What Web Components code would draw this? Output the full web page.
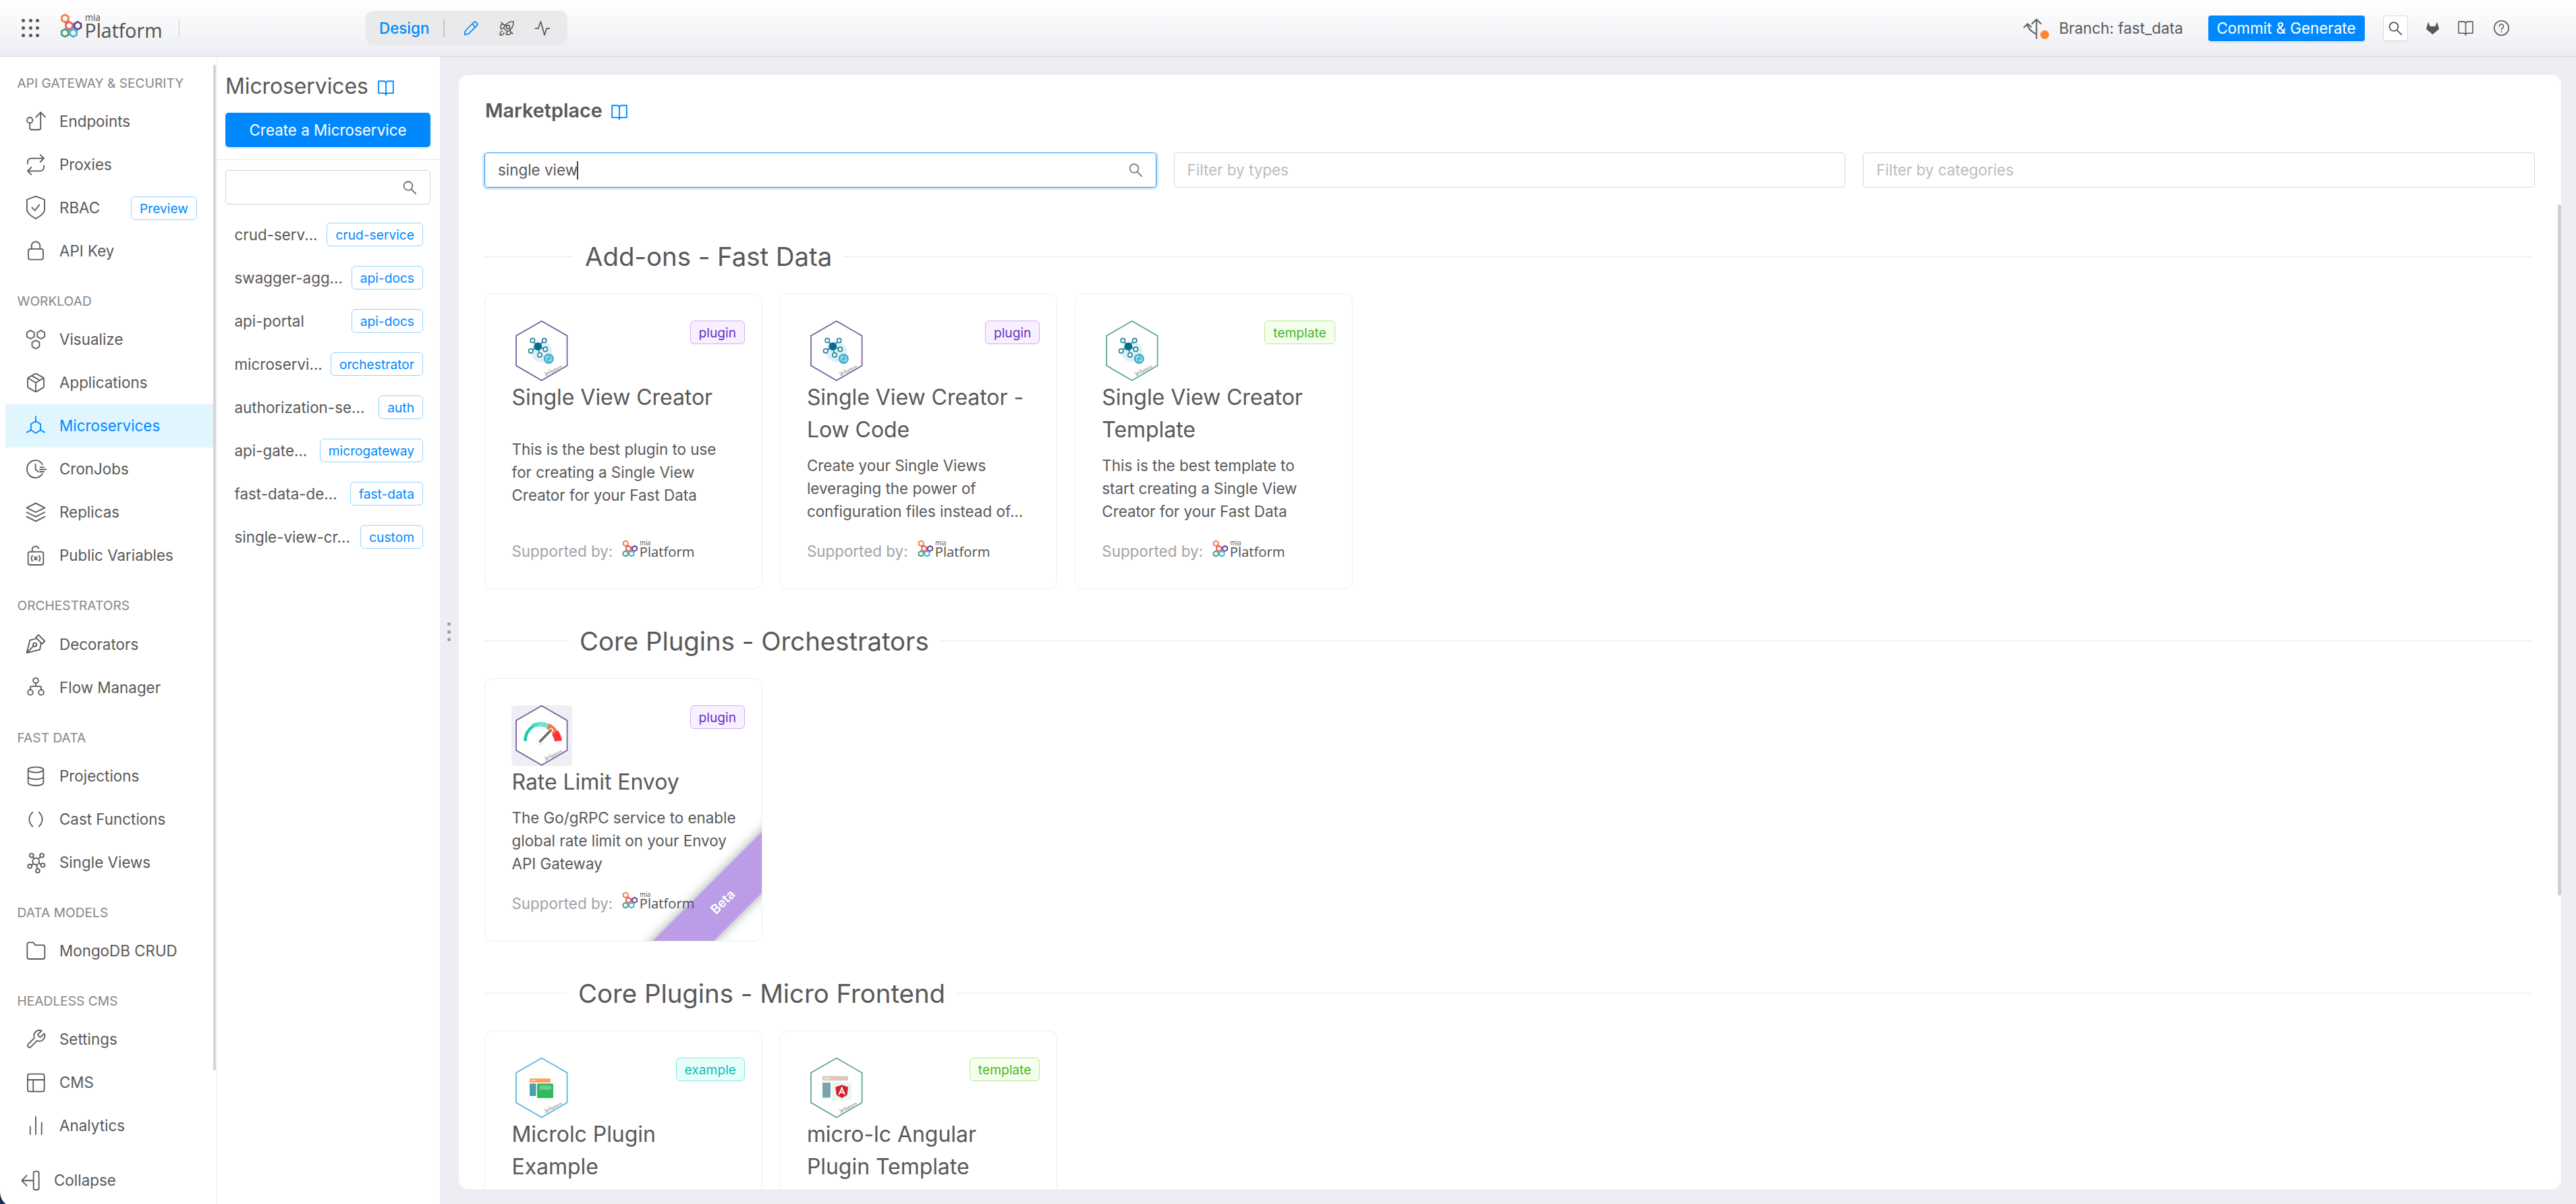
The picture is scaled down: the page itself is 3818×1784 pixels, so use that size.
<!DOCTYPE html>
<html lang="en">
<head>
<meta charset="utf-8">
<title>Mia Platform - Design</title>
<style>
html,body{margin:0;height:100%;overflow:hidden}
body{font-family:Inter,"Liberation Sans",sans-serif;font-size:22.4px;line-height:33.6px;color:#595959;background:#edeef3}
</style>
</head>
<body>
<mia-app></mia-app>
<script>
const hexPath=(cx,cy,r)=>{const w=r*0.87;return `M${cx} ${cy-r}L${cx+w} ${cy-r/2}V${cy+r/2}L${cx} ${cy+r}L${cx-w} ${cy+r/2}V${cy-r/2}Z`;};
const logoMark=`<g fill="none" stroke-width="2.7">
<path stroke="#f0804a" d="${hexPath(7.4,7.3,5.6)}"/><path stroke="#ea5460" d="${hexPath(13.6,18,5.6)}"/>
<path stroke="#5d4489" d="${hexPath(26.2,18,5.6)}"/><path stroke="#41a373" d="${hexPath(7.2,28.8,5.6)}"/>
<path stroke="#40b4da" d="${hexPath(19.7,28.8,5.6)}"/></g>
<g fill="#4f4f4f" font-family="'Open Sans','Noto Sans',sans-serif"><text x="37" y="11" font-size="14" textLength="23" lengthAdjust="spacingAndGlyphs">mia</text>
<text x="36.5" y="35.6" font-size="28.5" font-weight="500" textLength="115" lengthAdjust="spacingAndGlyphs">Platform</text></g>`;

const ICONS={
endpoints:'<circle cx="5.4" cy="10.6" r="3.1"/><path d="M5.4 13.8v5.4a2 2 0 0 0 2 2h8a2 2 0 0 0 2-2V2.2M12.2 7.2l5.2-5.4 5.2 5.4"/>',
proxies:'<path d="M17 1l4 4-4 4M3 11V9a4 4 0 0 1 4-4h14M7 23l-4-4 4-4M21 13v2a4 4 0 0 1-4 4H3"/>',
rbac:'<path d="M12 -.8l9.8 3.6v11c0 4-5.5 7.8-9.8 10.2-4.300-2.400-9.800-6.200-9.800-10.200v-11z"/><path d="M7.800 11.500l3.200 3.500 5-6.500"/>',
lock:'<rect x="3.800" y="9.600" width="16.400" height="11.800" rx="2"/><path d="M7.300 9.600V6.300a4.700 4.700 0 0 1 9.400 0v3.300"/>',
visualize:`<path d="${hexPath(6.2,6.6,4.7)}${hexPath(17.8,6.6,4.7)}${hexPath(12,17.6,4.7)}"/>`,
box:'<path d="M21 16V8a2 2 0 0 0-1-1.730l-7-4a2 2 0 0 0-2 0l-7 4A2 2 0 0 0 3 8v8a2 2 0 0 0 1 1.730l7 4a2 2 0 0 0 2 0l7-4A2 2 0 0 0 21 16zM3.270 6.960L12 12.010l8.730-5.050M12 22.080V12M7.500 4.200l9 5.200"/>',
micro:`<path d="M12 1.500v5.200l5.300 3.300v6.600L12 20l-5.300-3.400V10L12 6.700M6.700 16.600l-4.500 2.600M17.300 16.600l4.500 2.600"/>`,
cron:'<path d="M19.300 6.700A9.300 9.700 0 1 0 19.300 17.300M11.700 6.500v6l3.600 2.800M17 10h4M16.500 12.500h7M17 15h4"/>',
layers:'<path d="M12 2L2 7l10 5 10-5zM2 17l10 5 10-5M2 12l10 5 10-5"/>',
vars:'<rect x="3.500" y="8" width="17" height="14.500" rx="2"/><path d="M8 8V5.500a3.800 3.800 0 0 1 7.300-1.300M8.200 12.200q-2 3 0 6M15.800 12.200q2 3 0 6M10.500 13.500l3 3.400M13.500 13.500l-3 3.400"/>',
pen:'<g transform="translate(0 24) scale(1 -1)"><path d="M2 2l3.500 14L13 18l5-5-1.500-7.500zM2 2l7.600 7.600M12 19l7-7 3 3-7 7z"/><circle cx="11" cy="11" r="2"/></g>',
flow:'<circle cx="12" cy="4.800" r="2.900"/><circle cx="6" cy="18" r="2.900"/><circle cx="18" cy="18" r="2.900"/><path d="M12 7.700v3.500M6 15v-2.300q0-1.500 1.500-1.500h9q1.500 0 1.500 1.500V15"/>',
db:'<ellipse cx="12" cy="4.900" rx="8.500" ry="3"/><path d="M20.500 12.500c0 1.660-4 3-8.500 3s-8.500-1.340-8.500-3M3.500 5v14.500c0 1.660 4 3 8.500 3s8.500-1.340 8.500-3V5"/>',
parens:'<path d="M8.500 4c-5 5-5 11 0 16M15.500 4c5 5 5 11 0 16"/>',
net:'<circle cx="12.200" cy="10.800" r="3.700"/><circle cx="7.300" cy="4.200" r="2.200"/><circle cx="18.800" cy="4.200" r="2.200"/><circle cx="5.400" cy="16.200" r="2.200"/><circle cx="19.800" cy="15" r="2.200"/><circle cx="14.200" cy="21.200" r="2.200"/><path d="M8.700 6l1.500 1.800M17.200 5.900l-2.400 2.100M7.300 15l2.200-1.800M17.700 14l-2-1.200M13 14.500l.7 4.400"/>',
folder:'<path d="M22 19a2 2 0 0 1-2 2H4.500a2 2 0 0 1-2-2V4.500a2 2 0 0 1 2-2h4.700L11.500 5.500H20a2 2 0 0 1 2 2z"/>',
tool:'<path d="M14.700 6.300a1 1 0 0 0 0 1.400l1.600 1.600a1 1 0 0 0 1.400 0l3.770-3.770a6 6 0 0 1-7.940 7.940l-6.910 6.910a2.120 2.120 0 0 1-3-3l6.910-6.910a6 6 0 0 1 7.940-7.940l-3.760 3.760z"/>',
layout:'<rect x="3" y="2.500" width="18.500" height="19.500" rx="2"/><path d="M3 9h18.500M9.200 22V9"/>',
bars:'<path d="M18.500 21.500V8.500M12 21.500V2M5.800 21.500V13"/>',
collapse:'<rect x="15.500" y="2" width="6" height="20.500" rx="2"/><path d="M15 12.200H2.500M8 6.500l-5.500 5.700L8 18"/>',
search:'<circle cx="9.800" cy="9.300" r="7"/><path d="M14.800 14.800l7.200 7.200"/>',
book:'<path d="M2 3h7a3 3 0 0 1 3 3v16a2.500 2.500 0 0 0-2.500-2.500H2zM22 3h-7a3 3 0 0 0-3 3v16a2.500 2.500 0 0 1 2.500-2.500H22z"/>',
pencil:'<path d="M2.500 21.500l1.300-6L16.300 3a2.200 2.200 0 0 1 3.100 0l1.600 1.600a2.200 2.200 0 0 1 0 3.100L8.500 20.200zM14 5.500l4.500 4.500"/>',
rocket:'<path d="M22 2c-6-.3-11 2-14.500 9.500l5.500 5.500C20 13.500 22.300 8 22 2zM10 7.500L5 5.500c-2 2-2.500 4.500-1.500 7.500l4-1.500M16.500 14l2 5c-2 2.500-4.500 3-7.500 1.500l1.500-3.500M5.500 16c-2.500.5-3.500 3-3.500 6 3 0 5.500-1 6-3.500M4 3l5 5M21 20l-5-5"/><circle cx="14" cy="10" r="2.600"/>',
pulse:'<path d="M1.500 12.200h4.200L9.500 2l5.500 20 3.200-9.800H22.500"/>',
help:'<circle cx="12" cy="12" r="10.300"/><path d="M9 9.500a3 3 0 1 1 4.500 2.600q-1.500.8-1.500 2.200M12 17v.5"/>',
gitlab:'<path fill="currentColor" stroke="none" d="M5.200 2.500L8 9.500h8l2.800-7L22 13.500 12 22 2 13.500z"/>',
branch:'<path d="M16 23V2M11.200 6.800L16 2l4.800 4.800M16 18.500C10 15.500 6 12 6 7.500M2.200 11L6 7l4 3.400"/>'
};

const define=(name,html)=>customElements.define(name,class extends HTMLElement{
  connectedCallback(){
    if(this.shadowRoot)return;
    const t=document.createElement('template');
    t.innerHTML=typeof html==='function'?html(this):html;
    this.attachShadow({mode:'open'}).append(t.content.cloneNode(true));
  }
});

define('mia-icon',el=>`<style>:host{display:block;flex:none;width:${el.getAttribute('size')||32}px;height:${el.getAttribute('size')||32}px}
svg{display:block;width:100%;height:100%;overflow:visible;fill:none;stroke:currentColor;stroke-width:${el.getAttribute('stroke')||1.35};stroke-linecap:round;stroke-linejoin:round}</style>
<svg viewBox="0 0 24 24">${ICONS[el.getAttribute('name')]}</svg>`);

define('mia-logo',`<style>:host{display:block;flex:none;width:151px;height:38px}svg{display:block;width:100%;height:100%;overflow:visible}</style><svg viewBox="0 0 151 38">${logoMark}</svg>`);

define('mia-tag',`<style>:host{display:block;flex:none;box-sizing:border-box;height:35px;padding:0 12px;border:1px solid #91d5ff;border-radius:6px;background:#fff;color:#0089ff;font-size:19.2px;line-height:34px;white-space:nowrap}
:host([kind=plugin]){border-color:#d3adf7;background:#f9f0ff;color:#6530c8}
:host([kind=template]){color:#47b82a;border-color:#b7eb8f;background:#f6ffed}
:host([kind=example]){color:#13b9b9;border-color:#87e8de;background:#e6fffb}</style><slot></slot>`);

define('mia-header',`<style>
:host{display:flex;box-sizing:border-box;height:84px;flex:none;align-items:center;border-bottom:1px solid #d3d4d8;background:linear-gradient(#fff,#edeef3);padding:0 98px 0 32px}
.grid{display:grid;grid-template-columns:repeat(3,5px);gap:6px 5.500px}.grid i{width:5px;height:5px;border-radius:50%;background:#555}
mia-logo{margin:-6px 0 0 31px}.sep{width:1px;height:27px;background:#d4d4d4;margin-left:25px}
.pill{display:flex;align-items:center;height:51px;width:299px;box-sizing:border-box;margin-left:276px;padding-left:20px;border-radius:12px;background:#e9eaeb}
.pill b{flex:none;font-weight:450;color:#0089ff;width:95px}.pill u{flex:none;width:2px;height:26px;background:#c6c6c6;margin-right:27px}
.pill mia-icon+mia-icon{margin-left:29px}
.right{display:flex;align-items:center;margin-left:auto}
.branch{position:relative;margin-right:23px}.dot{position:absolute;left:27px;top:19px;width:13px;height:13px;border-radius:50%;background:#fd8733}
.commit{box-sizing:border-box;height:38px;width:232px;margin-left:37px;border-radius:4px;background:#0089ff;color:#fff;text-align:center;line-height:37px;box-shadow:0 3px 0 rgba(0,0,0,.05)}
.sq{display:flex;align-items:center;justify-content:center;width:35px;height:36px;border:1px solid #d9d9d9;border-radius:4px;background:#fff;margin:0 25px 0 27px;box-shadow:0 3px 0 rgba(0,0,0,.02)}
</style>
<div class="grid"><i></i><i></i><i></i><i></i><i></i><i></i><i></i><i></i><i></i></div>
<mia-logo></mia-logo><div class="sep"></div>
<div class="pill"><b>Design</b><u></u><mia-icon name="pencil" size="24" stroke="1.700" style="color:#0089ff"></mia-icon><mia-icon name="rocket" size="24" stroke="1.600"></mia-icon><mia-icon name="pulse" size="24" stroke="1.700"></mia-icon></div>
<div class="right"><div class="branch"><mia-icon name="branch" size="32" stroke="1.500"></mia-icon><div class="dot"></div></div><span>Branch: fast_data</span><div class="commit">Commit &amp; Generate</div><div class="sq"><mia-icon name="search" size="22" stroke="2"></mia-icon></div><mia-icon name="gitlab" size="23"></mia-icon><mia-icon name="book" size="25" stroke="1.500" style="margin:0 28px 0 25.500px"></mia-icon><mia-icon name="help" size="25" stroke="1.500"></mia-icon></div>`);

define('nav-item',el=>`<style>:host{display:flex;box-sizing:border-box;height:64px;align-items:center;padding:0 24px 0 29px;margin-left:8px}
:host([active]){background:#e1f5ff;color:#0089ff}span{margin-left:19px;flex:1}</style>
<mia-icon name="${el.getAttribute('icon')}"></mia-icon><span><slot></slot></span><slot name="tag"></slot>`);

define('nav-group',el=>`<style>:host{display:block}header{box-sizing:border-box;height:67.200px;padding:26.200px 0 0 25.500px;font-size:19.200px;color:#868686;white-space:nowrap}</style>
<header>${el.getAttribute('label').replace('&','&amp;')}</header><slot></slot>`);

define('mia-sidebar',`<style>
:host{display:flex;flex-direction:column;position:relative;box-sizing:border-box;width:322px;flex:none;background:#fff;border-right:1px solid #ebebeb}
nav{flex:1;min-height:0;margin-top:-3.200px;padding-right:5px}
.thumb{position:absolute;right:1px;top:12px;width:4px;height:1490px;border-radius:3px;background:#d4d4d4}
footer{display:flex;align-items:center;height:70px;padding-left:29px}footer span{margin-left:19px}
.corner{position:absolute;left:0;bottom:0;display:block}
</style>
<nav>
<nav-group label="API GATEWAY &amp; SECURITY"><nav-item icon="endpoints">Endpoints</nav-item><nav-item icon="proxies">Proxies</nav-item><nav-item icon="rbac">RBAC<mia-tag slot="tag">Preview</mia-tag></nav-item><nav-item icon="lock">API Key</nav-item></nav-group>
<nav-group label="WORKLOAD"><nav-item icon="visualize">Visualize</nav-item><nav-item icon="box">Applications</nav-item><nav-item icon="micro" active>Microservices</nav-item><nav-item icon="cron">CronJobs</nav-item><nav-item icon="layers">Replicas</nav-item><nav-item icon="vars">Public Variables</nav-item></nav-group>
<nav-group label="ORCHESTRATORS"><nav-item icon="pen">Decorators</nav-item><nav-item icon="flow">Flow Manager</nav-item></nav-group>
<nav-group label="FAST DATA"><nav-item icon="db">Projections</nav-item><nav-item icon="parens">Cast Functions</nav-item><nav-item icon="net">Single Views</nav-item></nav-group>
<nav-group label="DATA MODELS"><nav-item icon="folder">MongoDB CRUD</nav-item></nav-group>
<nav-group label="HEADLESS CMS"><nav-item icon="tool">Settings</nav-item><nav-item icon="layout">CMS</nav-item><nav-item icon="bars">Analytics</nav-item></nav-group>
</nav>
<footer><mia-icon name="collapse"></mia-icon><span>Collapse</span></footer>
<div class="thumb"></div>
<svg class="corner" width="10" height="20"><path d="M0 1Q0 13 8.500 20H0Z" fill="#182c50"/></svg>`);

define('service-row',el=>`<style>:host{display:flex;height:64px;align-items:center;justify-content:space-between;padding:0 25px 0 25.500px;white-space:nowrap}</style>
<span><slot></slot></span><mia-tag>${el.getAttribute('tag')}</mia-tag>`);

define('services-panel',`<style>
:host{display:flex;flex-direction:column;width:330px;flex:none;background:#fff}
h2{display:flex;align-items:center;margin:26px 0 0 12px;height:36px;font-size:32px;font-weight:400;letter-spacing:-.12px}h2 mia-icon{margin:4px 0 0 13px;color:#0089ff}
.btn{height:51px;line-height:52px;margin:21px 14px 0 12px;border-radius:5px;background:#0089ff;color:#fff;text-align:center;box-shadow:0 3px 0 rgba(0,0,0,.045)}
hr{width:100%;height:1px;border:0;margin:18px 0 15px;background:#e6e6e6}
.search{display:flex;align-items:center;justify-content:flex-end;box-sizing:border-box;height:51px;margin:0 14px 12.500px 12px;padding-right:19px;border:1px solid #d3d3d3;border-radius:5px}
</style>
<h2>Microservices<mia-icon name="book" size="26" stroke="1.700"></mia-icon></h2>
<div class="btn">Create a Microservice</div><hr><div class="search"><mia-icon name="search" size="22" stroke="1.700"></mia-icon></div>
<service-row tag="crud-service">crud-serv...</service-row><service-row tag="api-docs">swagger-agg...</service-row><service-row tag="api-docs">api-portal</service-row><service-row tag="orchestrator">microservi...</service-row><service-row tag="auth">authorization-se...</service-row><service-row tag="microgateway">api-gate...</service-row><service-row tag="fast-data">fast-data-de...</service-row><service-row tag="custom">single-view-cr...</service-row>`);

define('mia-splitter',`<style>:host{display:flex;flex-direction:column;align-items:center;justify-content:center;gap:6.600px;width:28px;flex:none;padding:4px 1px 0 0;box-sizing:border-box}i{width:5px;height:5px;border-radius:50%;background:#9d9d9d}</style><i></i><i></i><i></i>`);

const ART={
net:`<circle cx="44.700" cy="46" r="15.500" fill="#e0eff5"/><g stroke="#17809c" stroke-width="1.600" fill="#fff"><path d="M39.300 38.300L31.300 29.600M39.300 38.300L48.700 29.600M39.300 38.300L28.700 45M39.300 38.300L50.300 42.600M39.300 38.300L42 51"/><circle cx="31.300" cy="29.600" r="3.200"/><circle cx="48.700" cy="29.600" r="3.200"/><circle cx="28.700" cy="45" r="3.200"/><circle cx="50.300" cy="42.600" r="3.200"/><circle cx="42" cy="51" r="3.200"/></g><circle cx="39.300" cy="38.300" r="5.900" fill="#056d90"/><circle cx="55.300" cy="56.600" r="7.600" fill="#45b3d1"/><path d="M53.800 60.300a4 4 0 0 1-.6-7M56.800 53a4 4 0 0 1 .6 7M52 53.200h2.200v2.300M58.600 60h-2.200v-2.300" fill="none" stroke="#d9f1f7" stroke-width="1.200"/>`,
gauge:`<g fill="none"><path d="M20.500 53A26 26 0 0 1 31.500 31.500" stroke="#16c9ae" stroke-width="4.500"/><path d="M30.500 31.500A25 25 0 0 1 40 28" stroke="#48dcc0" stroke-width="6"/><path d="M39.500 28.200A24 24 0 0 1 54.500 31" stroke="#72e3ca" stroke-width="7"/><path d="M54 31A25 25 0 0 1 65 41" stroke="#fd7446" stroke-width="9"/><path d="M64.500 40.500A25 25 0 0 1 69.500 53" stroke="#fd3440" stroke-width="11"/></g><circle cx="42.500" cy="54" r="5" fill="#ededed"/><path d="M41.800 54L59 37" stroke="#fff" stroke-width="6" stroke-linecap="round"/><path d="M42.500 53.500L58.500 37" stroke="#6b6b6b" stroke-width="3.400" stroke-linecap="round"/>`,
page:`<rect x="27" y="31" width="31" height="6" rx="1" fill="#ffa05c"/><path d="M29.500 34h2M33 34h2" stroke="#fff" stroke-width="1.500"/><rect x="27" y="38.500" width="9.500" height="18.500" rx="1" fill="#47a2b4"/><rect x="38" y="38.500" width="24" height="21.500" rx="1.500" fill="#35b95f"/><rect x="41.500" y="41.500" width="17.500" height="6" rx="1" fill="#72cc90"/>`,
angular:`<rect x="24" y="27.500" width="38" height="6.800" rx="1" fill="#dcc9ba"/><path d="M27.500 31h2.500M31.500 31h2.500" stroke="#fff" stroke-width="2"/><rect x="24" y="37" width="12" height="22.500" rx="1" fill="#78a4af"/><rect x="38.500" y="37" width="28.500" height="26" rx="1" fill="#ebf5ef"/><path d="M52.700 40.500l9.400 3.200-1.500 11.800-7.900 4.400-7.900-4.400-1.500-11.800z" fill="#d3202f"/><path d="M48.500 55l4.200-10.200L57 55M50.200 51.500h5" fill="none" stroke="#fff" stroke-width="1.800"/>`
};

define('market-card',el=>`<style>
:host{position:relative;display:flex;flex-direction:column;box-sizing:border-box;width:412px;flex:none;border:1px solid #ededed;border-radius:12px;padding:39px 25px 24.800px 39px;overflow:hidden;background:#fff}
.top{display:flex;justify-content:space-between;align-items:flex-start}
.art{display:block;width:90px;height:90px;border-radius:6px}.art.bg{background:#edeff4}
h3{margin:0 14px 0 .5px;font-size:32px;line-height:48px;font-weight:400;letter-spacing:-.05px;white-space:nowrap}
.desc{display:flex;align-items:center;flex:1 0 126px;margin-left:.5px;line-height:34px;white-space:nowrap}
.by{display:flex;align-items:center;height:60px;flex:none;margin-left:.5px;color:#a3a3a3}.by mia-logo{width:107px;height:27px;margin:-8px 0 0 14px}
.ribbon{position:absolute;left:208px;bottom:26px;width:288px;height:64px;transform:rotate(-45deg);background:rgba(117,59,205,.5);box-shadow:0 0 16px rgba(0,0,0,.38);color:#fff;font-weight:600;font-size:19.200px;line-height:64px;text-align:center}
</style>
<div class="top"><svg class="art ${el.getAttribute('art')==='gauge'?'bg':''}" viewBox="0 0 90 90"><path d="M44.800 .8L82.600 22.600V66.800L44.800 88.800L7 66.800V22.600Z" fill="#fff" stroke="${el.getAttribute('edge')}" stroke-width="1.700"/>${ART[el.getAttribute('art')]}<g transform="translate(48 77) rotate(-30) scale(.185)">${logoMark}</g></svg><mia-tag kind="${el.getAttribute('kind')}">${el.getAttribute('kind')}</mia-tag></div>
<h3>${el.getAttribute('name')}</h3><div class="desc"><div><slot></slot></div></div>
${el.hasAttribute('folded')?'':'<div class="by"><span>Supported by:</span><mia-logo></mia-logo></div>'}
${el.hasAttribute('beta')?'<div class="ribbon">Beta</div>':''}`);

define('market-section',el=>`<style>
:host{display:block;margin-bottom:48px}.head{display:flex;align-items:center;height:58px;margin:0 4px 26px 0;font-size:38.400px}
.head::before,.head::after{content:"";height:1px;background:#e8e8e8}.head::before{width:${el.getAttribute('lead')}px}.head::after{flex:1}.head span{padding:2px 17px 0;letter-spacing:-.03px;white-space:nowrap}
.cards{display:flex;gap:25.400px;align-items:stretch}</style>
<div class="head"><span>${el.getAttribute('label')}</span></div><div class="cards"><slot></slot></div>`);

define('mia-field',`<style>:host{display:flex;align-items:center;box-sizing:border-box;height:52px;flex:1;padding:0 19px;border:1px solid #d6d6d6;border-radius:5px;color:#bcbcbc}
:host([focused]){border-color:#1c98ff;color:#595959;box-shadow:0 0 0 3px #cfe8fd;clip-path:inset(0 -4px -4px -4px)}
::slotted(mia-icon){margin-left:auto;color:#777}::slotted(.caret){width:2px;height:27px;margin-left:-1px;background:#444}</style><slot></slot>`);

define('mia-market',`<style>
:host{position:relative;display:flex;flex-direction:column;box-sizing:border-box;flex:1;min-width:0;margin:27px 22px 22px 0;padding:0 39px 0 38px;border-radius:14px;background:#fff;overflow:hidden}
h1{display:flex;align-items:center;margin:35px 0 0 1px;height:36px;font-size:28.800px;font-weight:600}h1 mia-icon{margin:3px 0 0 12px;color:#0089ff}
.filters{display:flex;gap:25.600px;margin-top:44px}.list{flex:1;min-height:0;margin-top:73px}
.thumb{position:absolute;right:0;top:192px;width:5px;height:1024px;border-radius:3px;background:#d0d0d0}
</style>
<h1>Marketplace<mia-icon name="book" size="26" stroke="1.700"></mia-icon></h1>
<div class="filters"><mia-field focused><span>single view</span><i class="caret"></i><mia-icon name="search" size="22" stroke="1.900"></mia-icon></mia-field><mia-field>Filter by types</mia-field><mia-field>Filter by categories</mia-field></div>
<div class="list">
<market-section label="Add-ons - Fast Data" lead="132">
<market-card kind="plugin" art="net" edge="#6f5a96" name="Single View Creator">This is the best plugin to use<br>for creating a Single View<br>Creator for your Fast Data</market-card>
<market-card kind="plugin" art="net" edge="#6f5a96" name="Single View Creator -<br>Low Code">Create your Single Views<br>leveraging the power of<br>configuration files instead of...</market-card>
<market-card kind="template" art="net" edge="#56a882" name="Single View Creator<br>Template">This is the best template to<br>start creating a Single View<br>Creator for your Fast Data</market-card>
</market-section>
<market-section label="Core Plugins - Orchestrators" lead="124">
<market-card kind="plugin" art="gauge" edge="#6f5a96" beta name="Rate Limit Envoy">The Go/gRPC service to enable<br>global rate limit on your Envoy<br>API Gateway</market-card>
</market-section>
<market-section label="Core Plugins - Micro Frontend" lead="122">
<market-card kind="example" art="page" edge="#50b6d8" folded name="Microlc Plugin<br>Example"></market-card>
<market-card kind="template" art="angular" edge="#56a882" folded name="micro-lc Angular<br>Plugin Template"></market-card>
</market-section>
</div><div class="thumb"></div>`);

define('mia-app',`<style>:host{display:flex;flex-direction:column;height:1784px;width:3818px;overflow:hidden}main{display:flex;flex:1;min-height:0}</style>
<mia-header></mia-header><main><mia-sidebar></mia-sidebar><services-panel></services-panel><mia-splitter></mia-splitter><mia-market></mia-market></main>`);
</script>
</body>
</html>
